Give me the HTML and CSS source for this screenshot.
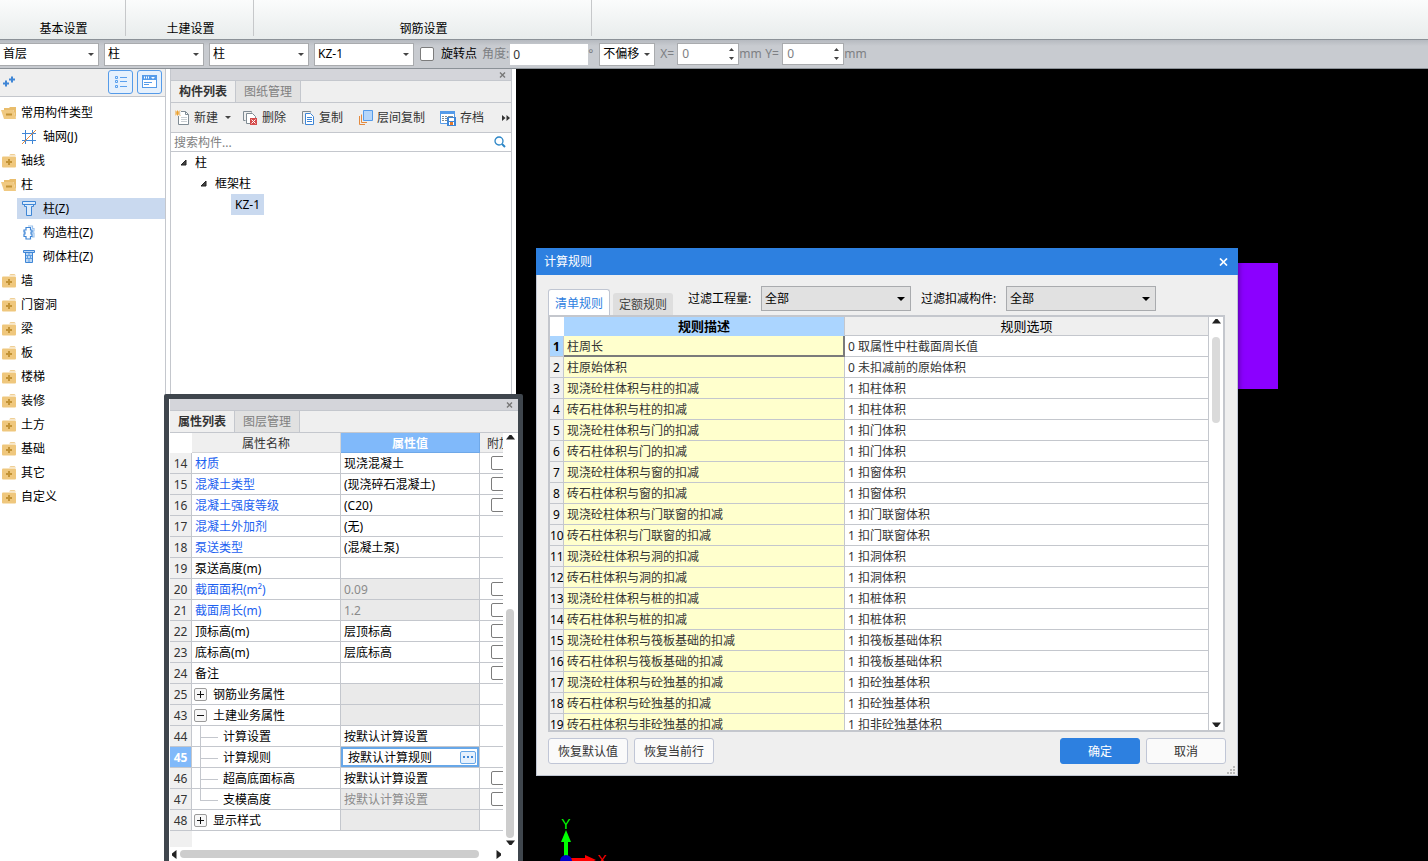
FILE: index.html
```html
<!DOCTYPE html>
<html lang="zh-CN">
<head>
<meta charset="utf-8">
<title>计算规则</title>
<link rel="stylesheet" href="styles.css">
</head>
<body>
<svg class="defs" width="0" height="0" aria-hidden="true">
  <symbol id="folder" viewBox="0 0 16 14">
    <path d="M8 1.500L9.500 0h4L15 1.500z" fill="#efcf95"/>
    <rect x="1" y="2.500" width="14" height="11" rx="1" fill="#efc77d"/>
    <path d="M8 5v6M5 8h6" stroke="#c39336" stroke-width="2"/>
  </symbol>
  <symbol id="folder-open" viewBox="0 0 16 14">
    <path d="M3 4V2h5l1-1h6v12L12.500 4z" fill="#e9bd6c"/>
    <path d="M0 4h12.500L15 13H3z" fill="#f0c981"/>
    <path d="M5 8.500h6" stroke="#c39336" stroke-width="2"/>
  </symbol>
  <symbol id="plus-box" viewBox="0 0 13 13">
    <rect x=".5" y=".5" width="12" height="12" rx="1.500" fill="#f7f7f7" stroke="#9b9b9b"/>
    <path d="M3 6.500h7M6.500 3v7" stroke="#111"/>
  </symbol>
  <symbol id="minus-box" viewBox="0 0 13 13">
    <rect x=".5" y=".5" width="12" height="12" rx="1.500" fill="#f7f7f7" stroke="#9b9b9b"/>
    <path d="M3 6.500h7" stroke="#111"/>
  </symbol>
  <symbol id="close" viewBox="0 0 7 6"><path d="M1 .5l5 5M6 .5l-5 5" stroke="#777" stroke-width="1.400"/></symbol>
  <symbol id="caret-up" viewBox="0 0 9 5"><path d="M0 4.500L3.500 0h2L9 4.500z" fill="#222"/></symbol>
  <symbol id="caret-down" viewBox="0 0 9 5"><path d="M0 .5L3.500 5h2L9 .5z" fill="#222"/></symbol>
  <symbol id="expand" viewBox="0 0 7 7"><path d="M6 1v5H1z" fill="#444" stroke="#222"/></symbol>
</svg>

<div class="app">
  <header class="ribbon">
    <div class="group g1">基本设置</div>
    <div class="group g2">土建设置</div>
    <div class="group g3">钢筋设置</div>
  </header>

  <div class="options">
    <span class="combo first"><select aria-label="楼层"><option>首层</option></select></span>
    <span class="combo"><select aria-label="构件大类"><option>柱</option></select></span>
    <span class="combo"><select aria-label="构件类型"><option>柱</option></select></span>
    <span class="combo"><select aria-label="构件"><option>KZ-1</option></select></span>
    <input class="tick" type="checkbox" id="rot">
    <label class="lbl-rot" for="rot">旋转点</label>
    <label class="muted lbl-ang" for="ang">角度:</label>
    <input class="field" id="ang" type="text" value="0">
    <span class="deg">°</span>
    <span class="combo offset"><select aria-label="偏移方式"><option>不偏移</option></select></span>
    <label class="muted axis" for="ox">X=</label>
    <span class="spin"><input id="ox" type="text" value="0"><svg width="5" height="12" viewBox="0 0 5 12"><path d="M0 3L2.500 0 5 3zM0 9l2.500 3L5 9z" fill="#444"/></svg></span>
    <span class="muted unit">mm</span>
    <label class="muted axis" for="oy">Y=</label>
    <span class="spin"><input id="oy" type="text" value="0"><svg width="5" height="12" viewBox="0 0 5 12"><path d="M0 3L2.500 0 5 3zM0 9l2.500 3L5 9z" fill="#444"/></svg></span>
    <span class="muted unit">mm</span>
  </div>

  <main class="work">
    <nav class="side">
      <div class="side-head">
        <svg width="13" height="11" viewBox="0 0 13 11"><path d="M4 4.500v6M1 7.500h6M10 .5v6M7 3.500h6" stroke="#3f86d6" stroke-width="2"/></svg>
        <span class="grow"></span>
        <button class="view" aria-label="列表视图"><svg width="14" height="14" viewBox="0 0 14 14" fill="none" stroke="#5aa0ee"><path d="M1.500 1.500h2v2h-2zM1.500 5.500h2v2h-2zM1.500 10.500h2v2h-2zM6 2.500h7M6 6.500h7M6 11.500h7"/></svg></button>
        <button class="view" aria-label="图标视图"><svg width="15" height="13" viewBox="0 0 15 13"><rect x=".5" y=".5" width="14" height="12" fill="#fff" stroke="#559be9"/><path d="M0 0h15v5H0z" fill="#559be9"/><path d="M2 2.500h1m1 0h1m1 0h1" stroke="#fff" stroke-width="2"/><path d="M9 2h4l-2 2z" fill="#fff"/><path d="M2 7.500h8M2 9.500h5" stroke="#559be9"/></svg></button>
      </div>
      <ul class="tree">
        <li><svg width="16" height="14"><use href="#folder-open"/></svg>常用构件类型</li>
        <li class="child"><span><svg width="16" height="16" viewBox="0 0 16 16" fill="none" stroke="#3f86d6"><path d="M1 4.500h14M1 11.500h14M4.500 1v14M11.500 1v14"/><path d="M1 15L15 1" stroke="#e38a3f"/></svg>轴网(J)</span></li>
        <li><svg width="16" height="14"><use href="#folder"/></svg>轴线</li>
        <li><svg width="16" height="14"><use href="#folder-open"/></svg>柱</li>
        <li class="child sel"><span><svg width="16" height="16" viewBox="0 0 16 16" fill="#dcebfb" stroke="#3f86d6"><path d="M1.500 .5h13v3h-13zM3.500 3.500h9v2h-2v9h-5v-9h-2z"/></svg>柱(Z)</span></li>
        <li class="child"><span><svg width="16" height="16" viewBox="0 0 16 16" fill="#fff" stroke="#3f86d6" stroke-width="1.200"><path d="M7 1h4.500v2.500H13V6h-1v2h1v4h-2" stroke="#9cc3ee"/><path d="M5 2.500h4.500V5H11v2h-1v2h1v2.500H9.500V14H5v-2.500H3V9h1V7H3V5h2z"/></svg>构造柱(Z)</span></li>
        <li class="child"><span><svg width="16" height="16" viewBox="0 0 16 16" fill="#bcd8f6" stroke="#3f86d6"><path d="M2.500 1.500h11v2h-11zM4.500 3.500h7v10h-7z"/><path d="M5 6.500h6M5 9.500h6M8 4v2M6.500 7v2M9.500 7v2M8 10v3" stroke="#5f9fe2"/></svg>砌体柱(Z)</span></li>
        <li><svg width="16" height="14"><use href="#folder"/></svg>墙</li>
        <li><svg width="16" height="14"><use href="#folder"/></svg>门窗洞</li>
        <li><svg width="16" height="14"><use href="#folder"/></svg>梁</li>
        <li><svg width="16" height="14"><use href="#folder"/></svg>板</li>
        <li><svg width="16" height="14"><use href="#folder"/></svg>楼梯</li>
        <li><svg width="16" height="14"><use href="#folder"/></svg>装修</li>
        <li><svg width="16" height="14"><use href="#folder"/></svg>土方</li>
        <li><svg width="16" height="14"><use href="#folder"/></svg>基础</li>
        <li><svg width="16" height="14"><use href="#folder"/></svg>其它</li>
        <li><svg width="16" height="14"><use href="#folder"/></svg>自定义</li>
      </ul>
    </nav>

    <section class="members">
      <div class="cap"><button class="x" aria-label="关闭"><svg width="7" height="6"><use href="#close"/></svg></button></div>
      <div class="tabs"><button class="tab on">构件列表</button><button class="tab">图纸管理</button></div>
      <div class="tools">
        <button class="new"><svg width="15" height="16" viewBox="0 0 15 16"><path d="M3.500 1.500h7l3 3v10h-10z" fill="#fff" stroke="#7f8b93"/><path d="M10.500 1.500v3h3" fill="none" stroke="#7f8b93"/><path d="M6 7.500h6M6 9.500h6M6 11.500h6" stroke="#c9ced2"/><path d="M0 0h6v6H0z" fill="#efefef"/><path d="M0 .5l5 5M5 .5l-5 5M2.500 .5v5M0 3h5" stroke="#eda12f"/></svg>新建<i class="dd"></i></button>
        <button class="del"><svg width="15" height="16" viewBox="0 0 15 16"><path d="M2.500 10.500h-2V1.500h8v1" fill="none" stroke="#7f8b93"/><path d="M3.500 3.500h6l3 3v7h-9z" fill="#fff" stroke="#7f8b93"/><path d="M7 8h7v7H7z" fill="#d44b4b"/><path d="M8.500 9.500l4 4M12.500 9.500l-4 4" stroke="#fff"/></svg>删除</button>
        <button class="copy"><svg width="14" height="16" viewBox="0 0 14 16"><path d="M2.500 13.500h-1V1.500h8v1" fill="none" stroke="#7f8b93"/><path d="M4.500 3.500h5l3 3v8h-8z" fill="#fff" stroke="#3f86d6"/><path d="M6 7.500h5M6 9.500h5M6 11.500h5" stroke="#3f86d6"/></svg>复制</button>
        <button class="floor"><svg width="15" height="16" viewBox="0 0 15 16"><path d="M1.500 6v8.500H7M3.500 4.500v8H9" fill="none" stroke="#e38a3f"/><path d="M5.500 .5h9v10h-9z" fill="#b5d6fa" stroke="#559be9"/></svg>层间复制</button>
        <button class="save"><svg width="16" height="16" viewBox="0 0 16 16"><path d="M.5 1.500h14v12H.5z" fill="#fff" stroke="#559be9"/><path d="M0 1h15v3H0z" fill="#559be9"/><path d="M2 6.500h2m1 0h2m1 0h5M2 8.500h2m1 0h2M2 10.500h2m1 0h2" stroke="#7f8b93"/><path d="M7 7h9v9H7z" fill="#3f86d6"/><path d="M9 8h5v3H9zM9 12h5v3H9z" fill="#fff"/><path d="M10 12h3v3h-3z" fill="#e37a2f"/></svg>存档</button>
        <svg class="more" width="8" height="6" viewBox="0 0 8 6"><path d="M0 0l3.500 3L0 6zM4.500 0L8 3 4.500 6z" fill="#333"/></svg>
      </div>
      <div class="search"><input type="text" placeholder="搜索构件..." aria-label="搜索构件"><svg width="12" height="12" viewBox="0 0 12 12" fill="none" stroke="#2c86c7"><circle cx="5" cy="5" r="4" stroke-width="1.300"/><path d="M8 8l3 3" stroke-width="2"/></svg></div>
      <ul class="mtree">
        <li class="l1"><svg width="7" height="7"><use href="#expand"/></svg>柱</li>
        <li class="l2"><svg width="7" height="7"><use href="#expand"/></svg>框架柱</li>
        <li class="l3"><span>KZ-1</span></li>
      </ul>
    </section>

    <section class="canvas">
      <svg class="column" width="40" height="126"><rect width="40" height="126" fill="#8b00ff"/></svg>
      <svg class="axes" width="60" height="46" viewBox="0 0 60 46">
        <path d="M13 24h4v18h-4z" fill="#0f0"/><path d="M15 15l5 12H10z" fill="#0f0"/>
        <path d="M18 43h17v4H18z" fill="#f00"/><path d="M34 40l11 5-11 5z" fill="#f00"/>
        <circle cx="15" cy="46" r="6" fill="#0000c8"/>
        <text x="15" y="14" fill="#0f0" text-anchor="middle">Y</text>
        <text x="51" y="50" fill="#f00" text-anchor="middle">X</text>
      </svg>
    </section>
  </main>

  <section class="props">
    <div class="cap"><button class="x" aria-label="关闭"><svg width="7" height="6"><use href="#close"/></svg></button></div>
    <div class="tabs"><button class="tab on">属性列表</button><button class="tab">图层管理</button></div>
    <div class="prop-body">
      <div class="prop-view">
        <table class="ptable">
          <colgroup><col class="c-no"><col class="c-name"><col class="c-val"><col class="c-add"></colgroup>
          <thead><tr><th class="corner"></th><th>属性名称</th><th class="active">属性值</th><th>附加</th></tr></thead>
          <tbody>
            <tr><th>14</th><td class="link">材质</td><td>现浇混凝土</td><td><input class="tick" type="checkbox" aria-label="附加 材质"></td></tr>
            <tr><th>15</th><td class="link">混凝土类型</td><td>(现浇碎石混凝土)</td><td><input class="tick" type="checkbox" aria-label="附加 混凝土类型"></td></tr>
            <tr><th>16</th><td class="link">混凝土强度等级</td><td>(C20)</td><td><input class="tick" type="checkbox" aria-label="附加 混凝土强度等级"></td></tr>
            <tr><th>17</th><td class="link">混凝土外加剂</td><td>(无)</td><td></td></tr>
            <tr><th>18</th><td class="link">泵送类型</td><td>(混凝土泵)</td><td></td></tr>
            <tr><th>19</th><td>泵送高度(m)</td><td></td><td></td></tr>
            <tr><th>20</th><td class="link">截面面积(m²)</td><td class="off">0.09</td><td><input class="tick" type="checkbox" aria-label="附加 截面面积"></td></tr>
            <tr><th>21</th><td class="link">截面周长(m)</td><td class="off">1.2</td><td><input class="tick" type="checkbox" aria-label="附加 截面周长"></td></tr>
            <tr><th>22</th><td>顶标高(m)</td><td>层顶标高</td><td><input class="tick" type="checkbox" aria-label="附加 顶标高"></td></tr>
            <tr><th>23</th><td>底标高(m)</td><td>层底标高</td><td><input class="tick" type="checkbox" aria-label="附加 底标高"></td></tr>
            <tr><th>24</th><td>备注</td><td></td><td><input class="tick" type="checkbox" aria-label="附加 备注"></td></tr>
            <tr><th>25</th><td class="node"><div><svg width="13" height="13"><use href="#plus-box"/></svg>钢筋业务属性</div></td><td class="off"></td><td></td></tr>
            <tr><th>43</th><td class="node"><div><svg width="13" height="13"><use href="#minus-box"/></svg>土建业务属性</div></td><td class="off"></td><td></td></tr>
            <tr><th>44</th><td class="leaf"><div>计算设置</div></td><td>按默认计算设置</td><td></td></tr>
            <tr class="cur"><th>45</th><td class="leaf"><div>计算规则</div></td><td class="edit"><div>按默认计算规则<button aria-label="编辑计算规则"><svg width="10" height="2" viewBox="0 0 10 2"><path d="M0 0h2v2H0zM4 0h2v2H4zM8 0h2v2H8z" fill="#3f86d6"/></svg></button></div></td><td></td></tr>
            <tr><th>46</th><td class="leaf"><div>超高底面标高</div></td><td>按默认计算设置</td><td><input class="tick" type="checkbox" aria-label="附加 超高底面标高"></td></tr>
            <tr><th>47</th><td class="leaf end"><div>支模高度</div></td><td class="off">按默认计算设置</td><td><input class="tick" type="checkbox" aria-label="附加 支模高度"></td></tr>
            <tr><th>48</th><td class="node"><div><svg width="13" height="13"><use href="#plus-box"/></svg>显示样式</div></td><td class="off"></td><td></td></tr>
          </tbody>
        </table>
        <div class="gutter"></div>
      </div>
      <div class="vbar"><svg width="9" height="5"><use href="#caret-up"/></svg><span class="space"></span><span class="thumb"></span><svg width="9" height="5"><use href="#caret-down"/></svg></div>
    </div>
    <div class="hbar"><svg width="5" height="9" viewBox="0 0 5 9"><path d="M4.500 0L0 3.500v2L4.500 9z" fill="#222"/></svg><span class="thumb"></span><svg width="5" height="9" viewBox="0 0 5 9"><path d="M.5 0L5 3.500v2L.5 9z" fill="#222"/></svg></div>
  </section>

  <section class="dialog" role="dialog" aria-labelledby="dlg-title">
    <div class="dlg-cap"><span id="dlg-title">计算规则</span><button aria-label="关闭"><svg width="9" height="8" viewBox="0 0 9 8"><path d="M1 .5l7 7M8 .5l-7 7" stroke="#fff" stroke-width="1.700"/></svg></button></div>
    <div class="dlg-body">
      <div class="dlg-top">
        <button class="dtab on">清单规则</button><button class="dtab">定额规则</button>
        <label class="f1" for="fq">过滤工程量:</label>
        <span class="filter"><select id="fq"><option>全部</option></select></span>
        <label class="f2" for="fm">过滤扣减构件:</label>
        <span class="filter"><select id="fm"><option>全部</option></select></span>
      </div>
      <div class="frame">
        <div class="rule-view">
          <table class="rtable">
            <colgroup><col class="r-no"><col class="r-desc"><col></colgroup>
            <thead><tr><th class="corner"></th><th class="active">规则描述</th><th>规则选项</th></tr></thead>
            <tbody>
              <tr class="cur"><th>1</th><td>柱周长</td><td>0 取属性中柱截面周长值</td></tr>
              <tr><th>2</th><td>柱原始体积</td><td>0 未扣减前的原始体积</td></tr>
              <tr><th>3</th><td>现浇砼柱体积与柱的扣减</td><td>1 扣柱体积</td></tr>
              <tr><th>4</th><td>砖石柱体积与柱的扣减</td><td>1 扣柱体积</td></tr>
              <tr><th>5</th><td>现浇砼柱体积与门的扣减</td><td>1 扣门体积</td></tr>
              <tr><th>6</th><td>砖石柱体积与门的扣减</td><td>1 扣门体积</td></tr>
              <tr><th>7</th><td>现浇砼柱体积与窗的扣减</td><td>1 扣窗体积</td></tr>
              <tr><th>8</th><td>砖石柱体积与窗的扣减</td><td>1 扣窗体积</td></tr>
              <tr><th>9</th><td>现浇砼柱体积与门联窗的扣减</td><td>1 扣门联窗体积</td></tr>
              <tr><th>10</th><td>砖石柱体积与门联窗的扣减</td><td>1 扣门联窗体积</td></tr>
              <tr><th>11</th><td>现浇砼柱体积与洞的扣减</td><td>1 扣洞体积</td></tr>
              <tr><th>12</th><td>砖石柱体积与洞的扣减</td><td>1 扣洞体积</td></tr>
              <tr><th>13</th><td>现浇砼柱体积与桩的扣减</td><td>1 扣桩体积</td></tr>
              <tr><th>14</th><td>砖石柱体积与桩的扣减</td><td>1 扣桩体积</td></tr>
              <tr><th>15</th><td>现浇砼柱体积与筏板基础的扣减</td><td>1 扣筏板基础体积</td></tr>
              <tr><th>16</th><td>砖石柱体积与筏板基础的扣减</td><td>1 扣筏板基础体积</td></tr>
              <tr><th>17</th><td>现浇砼柱体积与砼独基的扣减</td><td>1 扣砼独基体积</td></tr>
              <tr><th>18</th><td>砖石柱体积与砼独基的扣减</td><td>1 扣砼独基体积</td></tr>
              <tr><th>19</th><td>砖石柱体积与非砼独基的扣减</td><td>1 扣非砼独基体积</td></tr>
            </tbody>
          </table>
        </div>
        <div class="rbar"><svg width="9" height="5"><use href="#caret-up"/></svg><span class="thumb"></span><span class="grow"></span><svg width="9" height="5"><use href="#caret-down"/></svg></div>
      </div>
      <div class="dlg-foot">
        <button class="btn">恢复默认值</button><button class="btn">恢复当前行</button>
        <span class="grow"></span>
        <button class="btn primary">确定</button><button class="btn">取消</button>
      </div>
    </div>
    <svg class="grip" width="8" height="8" viewBox="0 0 8 8"><path d="M6 0h2v2H6zM3 3h2v2H3zM6 3h2v2H6zM0 6h2v2H0zM3 6h2v2H3zM6 6h2v2H6z" fill="#b9b9b9"/></svg>
  </section>
</div>
</body>
</html>
```
FILE: styles.css
```css
* { box-sizing: border-box; }
html, body { height: 100%; }
body {
  margin: 0;
  overflow: hidden;
  background: #fff;
  color: #000;
  font: 12px/20px "Noto Sans", "Noto Sans CJK SC", sans-serif;
}
button, input, select { font: inherit; color: inherit; margin: 0; padding: 0; border: 0; background: none; border-radius: 0; }
button { display: flex; align-items: center; white-space: nowrap; }
select { appearance: none; width: 100%; height: 100%; }
input { min-width: 0; }
ul { list-style: none; margin: 0; padding: 0; }
svg { display: block; flex: none; }
th { font-weight: 400; padding: 0; }
.defs { position: absolute; }
.grow { flex: 1; }

.app { position: relative; display: flex; flex-direction: column; height: 100vh; }

/* ribbon */
.ribbon { display: flex; height: 39px; padding-bottom: 3px; flex: none; background: linear-gradient(#fbfcfc, #e8ecec); }
.group { display: flex; align-items: flex-end; justify-content: center; padding-left: 2px; border-right: 1px solid #c6c8ca; line-height: 14px; }
.g1 { width: 126px; }
.g2 { width: 128px; }
.g3 { width: 338px; }

/* option bar */
.options {
  display: flex; align-items: center; flex: none; height: 30px; white-space: nowrap;
  background: linear-gradient(#b6bac0, #c8cbd0 6px);
  border-top: 1px solid #8b9197; border-bottom: 1px solid #8b9197;
}
.combo { position: relative; width: 100px; height: 23px; margin-right: 5px; background: #fff; border: 1px solid #a9abae; }
.combo.first { width: 99px; border-left: 0; }
.combo select { padding-left: 3px; }
.combo::after, .filter::after { content: ""; position: absolute; right: 4px; top: 9px; border: 3px solid transparent; border-top-color: #444; border-bottom: 0; pointer-events: none; }
.combo.offset { width: 56px; margin: 0 5px 0 6px; }
.tick { appearance: none; width: 14px; height: 14px; flex: none; background: #fff; border: 1px solid #7c7c7c; border-radius: 2px; }
.options .tick { margin: 0 7px 0 1px; }
.lbl-rot { margin-right: 5px; }
.lbl-ang { margin-right: 1px; }
.muted, .deg { color: #7d7f83; }
.field { width: 78px; height: 21px; padding-left: 3px; background: #fff; color: #333; }
.deg { width: 5px; }
.axis { width: 17px; }
.spin { display: flex; align-items: center; justify-content: space-between; width: 62px; height: 22px; padding: 0 4px; background: #fff; border: 1px solid #a9abae; }
.spin input { width: 40px; height: 20px; color: #7d7f83; }
.unit { width: 26px; }

/* work area */
.work { display: flex; flex: 1; min-height: 0; gap: 4px; }
.side { width: 166px; border-right: 1px solid #c4c7cd; }
.side-head { display: flex; align-items: center; gap: 4px; height: 28px; padding: 0 3px 2px 2px; background: #efefef; border-bottom: 1px solid #c4c7cd; }
.view { justify-content: center; width: 25px; height: 24px; background: #e6f1fd; border: 1px solid #559be9; border-radius: 3px; }
.tree { padding-top: 4px; }
.tree li { display: flex; align-items: center; gap: 4px; height: 24px; padding-left: 1px; }
.tree .child { align-items: flex-start; padding: 1px 0 0 17px; }
.child span { display: flex; flex: 1; align-items: center; gap: 6px; height: 21px; padding: 1px 0 0 4px; }
.sel span { background: #c9d9ef; }

.members { width: 342px; border: solid #c4c7cd; border-width: 0 1px; }
.cap { display: flex; justify-content: flex-end; align-items: center; height: 12px; padding-right: 5px; background: #d4d5da; border-bottom: 1px solid #c4c7cd; }
.tabs { display: flex; height: 22px; background: #efefef; border-bottom: 1px solid #c4c7cd; }
.tab { justify-content: center; width: 65px; border-right: 1px solid #c4c7cd; background: #e1e1e1; color: #808080; }
.tab.on { background: #efefef; color: #333; font-weight: 700; }
.tools { display: flex; align-items: center; height: 30px; padding-left: 4px; background: #efefef; border-bottom: 1px solid #c4c7cd; color: #333; }
.tools button { gap: 4px; height: 24px; }
.new, .floor { margin-right: 12px; }
.del { margin-right: 15px; }
.copy { margin-right: 15px; }
.dd { margin-left: 3px; border: 3px solid transparent; border-top-color: #444; border-bottom: 0; }
.save { margin-left: 3px; }
.more { margin: 0 1px 0 auto; }
.search { display: flex; align-items: center; height: 19px; padding: 0 5px 0 3px; border-bottom: 1px solid #c4c7cd; }
.search input { flex: 1; height: 18px; padding-top: 1px; }
.search input::placeholder { color: #808080; opacity: 1; }
.mtree li { display: flex; align-items: center; gap: 8px; height: 21px; }
.mtree .l1 { padding-left: 9px; }
.mtree .l2 { padding-left: 29px; }
.mtree .l3 { padding-left: 60px; }
.l3 span { height: 21px; padding: 1px 4px 0; background: #c9d9ef; }

.canvas { position: relative; flex: 1; background: #000; overflow: hidden; }
.column { position: absolute; left: 722px; top: 194px; }
.axes { position: absolute; left: 35px; bottom: 0; font: 14px "Liberation Sans", sans-serif; }

/* floating property window */
.props {
  position: absolute; left: 164px; top: 394px; bottom: -8px; width: 359px;
  display: flex; flex-direction: column; padding: 0 0 3px 1px;
  background: #fff; border: 5px solid #3f464d; border-radius: 2px;
}
.prop-body { display: flex; flex: 1; min-height: 0; }
.prop-view { display: flex; flex-direction: column; width: 333px; overflow: hidden; }
.ptable { width: 349px; table-layout: fixed; border-spacing: 0; flex: none; }
.c-no { width: 22px; }
.c-name { width: 149px; }
.c-val { width: 139px; }
.ptable th, .ptable td { height: 21px; padding: 2px 0 0; border: solid #c4c7cd; border-width: 0 1px 1px 0; line-height: 18px; white-space: nowrap; overflow: hidden; }
.ptable thead th { height: 20px; background: #efefef; color: #333; line-height: 17px; border-color: #d3d4d7; }
.ptable thead .corner { background: #fff; border-color: #fff; }
.ptable thead .active { background: #80b9fa; color: #fff; font-weight: 700; border-color: #6fa8e8; }
.ptable tbody th { background: #f0f0f0; color: #333; }
.ptable td { padding-left: 3px; }
.ptable td:nth-child(4) { padding: 0 0 0 11px; }
.ptable .link { color: #1c5ff0; }
.ptable .off { background: #eaeaea; color: #8a8a8a; }
.ptable .tick { display: block; }
.ptable .cur th { background: #80b9fa; color: #fff; font-weight: 700; }
.ptable .node { padding: 0 0 0 2px; }
.node div { display: flex; align-items: center; gap: 6px; height: 20px; padding-top: 2px; }
.node svg { margin-top: -2px; }
.ptable .leaf { padding: 0 0 0 3px; }
.leaf div { position: relative; height: 20px; padding: 2px 0 0 28px; }
.leaf div::before { content: ""; position: absolute; left: 5px; top: 0; width: 17px; height: 11px; border: solid #c4c7cd; border-width: 0 0 1px 1px; }
.leaf div::after { content: ""; position: absolute; left: 5px; top: 10px; height: 11px; border-left: 1px solid #c4c7cd; }
.leaf.end div::after { display: none; }
.ptable td.edit { padding: 0; }
.edit div { display: flex; align-items: center; justify-content: space-between; height: 20px; padding: 1px 1px 0 5px; border: 2px solid #67a7e8; }
.edit button { justify-content: center; width: 16px; height: 13px; margin-top: -1px; background: #e6f1fd; border: 1px solid #67a7e8; border-radius: 2px; }
.gutter { flex: 1; width: 22px; background: #f0f0f0; }
.vbar { display: flex; flex: 1; flex-direction: column; align-items: center; padding: 2px 1px 2px 0; }
.vbar .space { flex: 170; }
.vbar .thumb { flex: 230; width: 8px; margin-bottom: 2px; border-radius: 4px; background: #cdcdcd; }
.hbar { display: flex; align-items: center; height: 14px; padding: 0 17px 0 2px; gap: 3px; }
.hbar .thumb { width: 299px; height: 8px; margin-right: auto; border-radius: 4px; background: #cdcdcd; }

/* rule dialog */
.dialog { position: absolute; left: 536px; top: 248px; width: 702px; background: #efefef; box-shadow: 0 0 6px rgba(0, 0, 0, .5); }
.dlg-cap { display: flex; align-items: center; justify-content: space-between; height: 27px; padding: 0 10px 0 8px; background: #2d80e0; color: #fff; }
.dlg-body { padding: 11px 12px 11px 11px; border: 1px solid #c0c6d2; border-top: 0; }
.dlg-top { display: flex; align-items: flex-end; }
.dtab { justify-content: center; width: 60px; height: 22px; padding-top: 2px; background: #dedede; color: #444; border-radius: 3px 3px 0 0; }
.dtab.on { width: 62px; height: 26px; margin-right: 3px; background: #fff; color: #2d80e0; border: 1px solid #c0c6d2; border-bottom: 0; }
.dlg-top label { margin-bottom: 6px; }
.f1 { width: 73px; margin-left: 15px; }
.f2 { width: 85px; margin-left: 10px; }
.filter { position: relative; width: 150px; height: 25px; margin-bottom: 4px; background: #e1e1e1; border: 1px solid #a9abae; }
.filter select { padding-left: 3px; }
.filter::after { right: 5px; top: 10px; border-width: 4px 4px 0; border-top-color: #000; }
.frame { display: flex; height: 417px; background: #fff; border: 2px solid #c4c7cd; }
.rule-view { flex: 1; overflow: hidden; }
.rtable { width: 100%; table-layout: fixed; border-spacing: 0; }
.r-no { width: 14px; }
.r-desc { width: 281px; }
.rtable th, .rtable td { height: 21px; padding: 2px 0 0; border: solid #c4c7cd; border-width: 0 1px 1px 0; line-height: 18px; white-space: nowrap; }
.rtable thead th { height: 19px; padding: 0; font-size: 13px; background: #efefef; }
.rtable thead .corner { background: #fff; border-color: #fff; }
.rtable thead .active { background: #abd5ff; font-weight: 700; border-bottom-color: #abd5ff; }
.rtable tbody th { background: #f0f0f0; text-align: center; }
.rtable td { padding-left: 3px; color: #333; }
.rtable td:nth-child(2) { background: #ffffcd; }
.rtable .cur th { background: #abd5ff; font-weight: 700; }
.rtable .cur td:nth-child(2) { border-color: #7b7b7b; border-width: 0 2px 2px 0; line-height: 17px; }
.rbar { display: flex; flex-direction: column; align-items: center; width: 14px; padding: 2px 0 3px; }
.rbar .thumb { width: 8px; height: 86px; margin-top: 13px; border-radius: 4px; background: #dadada; }
.dlg-foot { display: flex; gap: 6px; margin: 6px -1px 0 0; }
.btn { justify-content: center; width: 80px; height: 26px; padding-top: 2px; background: #fafafa; color: #333; border: 1px solid #c0c6d6; border-radius: 3px; }
.primary { background: #2d80e0; border-color: #2d80e0; color: #fff; }
.grip { position: absolute; right: 3px; bottom: 2px; }
```
